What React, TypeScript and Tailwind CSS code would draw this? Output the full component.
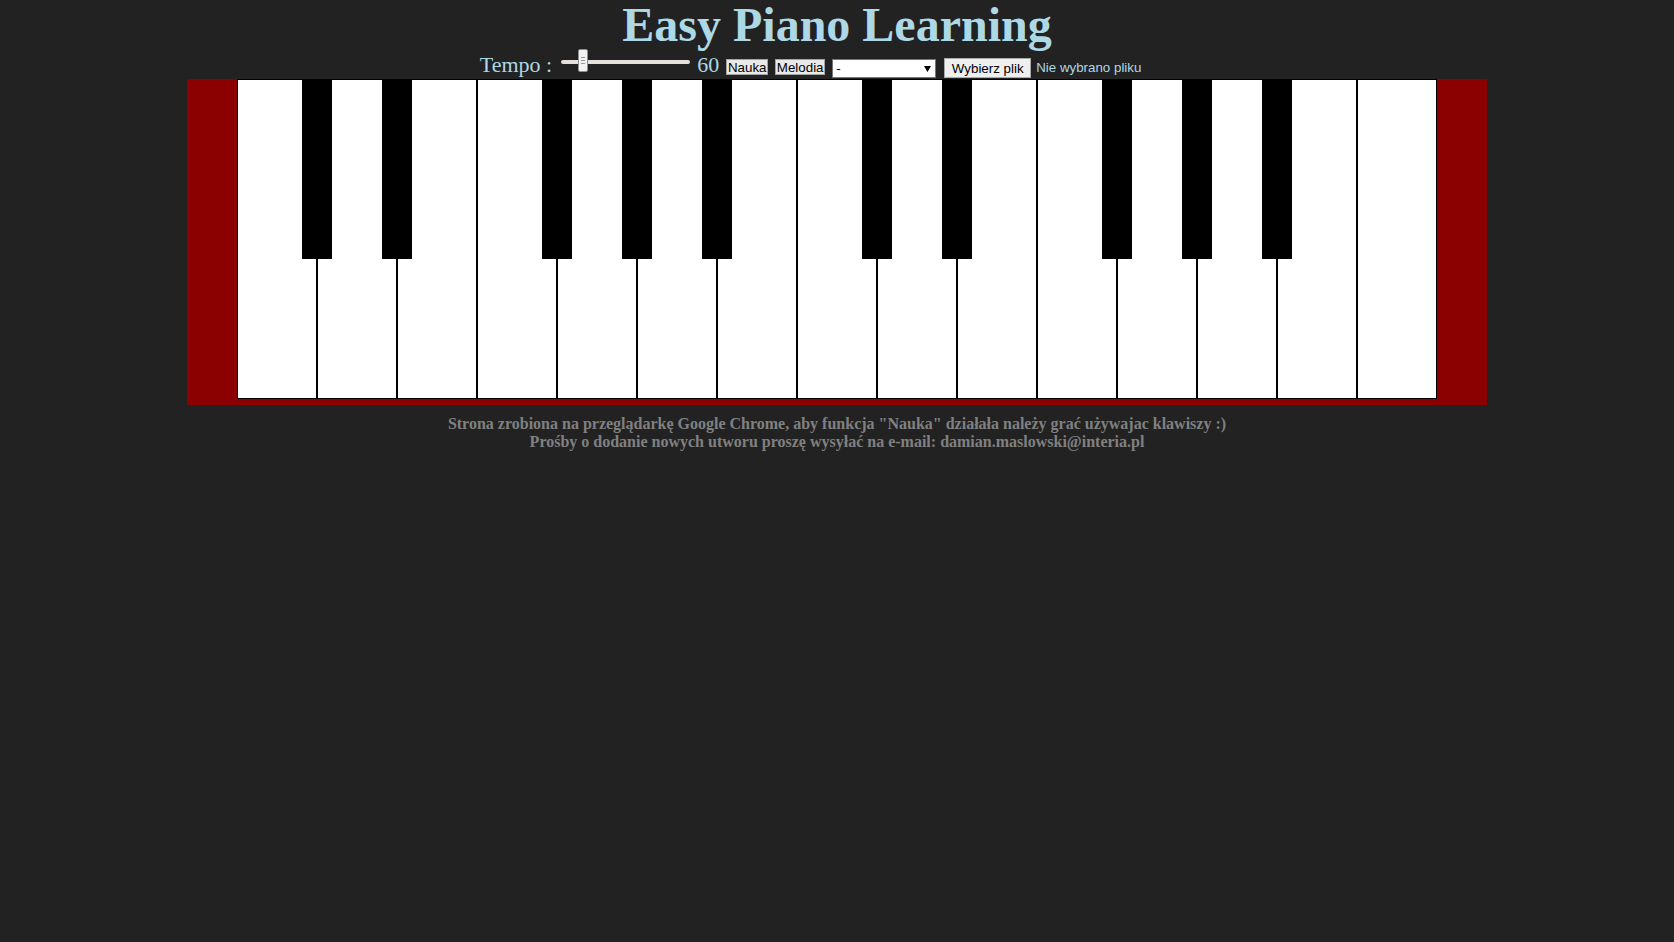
import React from "react";

const WHITE_COUNT = 15;
const BLACK_BOUNDARIES = [1, 2, 4, 5, 6, 8, 9, 11, 12, 13];

function Slider() {
  return (
    <div className="relative ml-[9px] mb-[6px] h-[24px] w-[129px] shrink-0">
      <div className="mt-[11px] h-[4px] w-full rounded-[2px] bg-[#e4e0db]" />
      <div className="absolute left-[17px] top-0 flex h-[23px] w-[10px] flex-col items-center justify-center gap-[2px] rounded-[2px] border border-[#8f8f8f] bg-[#f3f3f3]">
        <div className="h-px w-[4px] bg-[#9a9a9a]" />
        <div className="h-px w-[4px] bg-[#9a9a9a]" />
        <div className="h-px w-[4px] bg-[#9a9a9a]" />
      </div>
    </div>
  );
}

function SmallButton({ label, width }: { label: string; width: string }) {
  return (
    <div
      className={`ml-[7px] mb-[4px] flex h-[16px] ${width} shrink-0 items-center justify-center border border-[#a3a3a3] bg-[#e9e9e9] pt-[1px] font-['Liberation_Sans',Arial,sans-serif] text-[13.33px] leading-[14px] text-black`}
    >
      {label}
    </div>
  );
}

export default function App() {
  return (
    <div className="min-h-screen w-full bg-[#222222]">
      <h1 className="h-[48px] overflow-visible text-center font-['Liberation_Serif','Times_New_Roman',serif] text-[48px] font-bold leading-[50px] text-[#add8e6]">
        Easy Piano Learning
      </h1>

      <div className="flex h-[31px] items-end justify-center">
        <span className="mb-[3px] shrink-0 whitespace-pre font-['Liberation_Serif','Times_New_Roman',serif] text-[22px] leading-[22px] text-[#add8e6]">
          Tempo :
        </span>
        <Slider />
        <span className="ml-[7px] mb-[3px] shrink-0 font-['Liberation_Serif','Times_New_Roman',serif] text-[22px] leading-[22px] text-[#add8e6]">
          60
        </span>
        <SmallButton label="Nauka" width="w-[42px]" />
        <SmallButton label="Melodia" width="w-[50px]" />
        <div className="ml-[7px] mb-[1px] flex h-[19px] w-[104px] shrink-0 items-center justify-between border border-[#767676] bg-white pl-[3px] pr-[4px] font-['Liberation_Sans',Arial,sans-serif] text-[13.33px] leading-[15px] text-black">
          <span>-</span>
          <svg width="7" height="6" viewBox="0 0 7 6">
            <polygon points="0,0 7,0 3.5,6" fill="#000" />
          </svg>
        </div>
        <div className="ml-[8px] flex w-[250px] shrink-0 items-end">
          <div className="mb-[1px] flex h-[20px] w-[87px] shrink-0 items-center justify-center border border-[#a9a9a9] bg-[#efefef] pt-[1px] font-['Liberation_Sans',Arial,sans-serif] text-[13.33px] leading-[15px] text-black">
            Wybierz plik
          </div>
          <span className="ml-[5px] mb-[4px] whitespace-nowrap font-['Liberation_Sans',Arial,sans-serif] text-[13.33px] leading-[15px] text-[#add8e6]">
            Nie wybrano pliku
          </span>
        </div>
      </div>

      <div className="mx-auto w-[1300px] bg-[#8b0000] px-[50px] pb-[6px]">
        <div className="relative flex h-[320px] w-[1200px]">
          {Array.from({ length: WHITE_COUNT }).map((_, i) => (
            <div
              key={i}
              className="h-[320px] w-[80px] shrink-0 border border-black bg-white"
            />
          ))}
          {BLACK_BOUNDARIES.map((b) => (
            <div
              key={b}
              className="absolute top-0 h-[180px] w-[30px] bg-black"
              style={{ left: b * 80 - 15 }}
            />
          ))}
        </div>
      </div>

      <p className="mt-[10px] text-center font-['Liberation_Serif','Times_New_Roman',serif] text-[16px] font-bold leading-[18px] text-[#808080]">
        Strona zrobiona na przeglądarkę Google Chrome, aby funkcja "Nauka" działała należy grać używajac klawiszy :)
        <br />
        Prośby o dodanie nowych utworu proszę wysyłać na e-mail: damian.maslowski@interia.pl
      </p>
    </div>
  );
}
